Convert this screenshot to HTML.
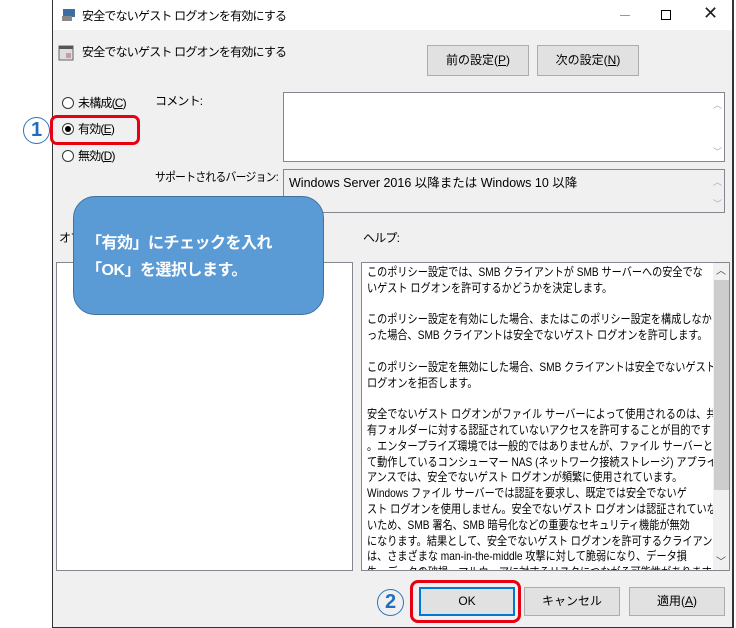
<!DOCTYPE html>
<html><head><meta charset="utf-8"><style>
*{margin:0;padding:0;box-sizing:border-box}
body{width:736px;height:628px;background:#fff;position:relative;overflow:hidden;font-family:"Liberation Sans","Noto Sans CJK JP",sans-serif;font-size:12px;color:#000}
.a{position:absolute}
.win{left:52px;top:0;width:682px;height:628px;background:#f0f0f0;border:1px solid #333;border-top:none;border-right:2px solid #333}
.title{left:53px;top:0;width:679px;height:30px;background:#fff}
.btn{position:absolute;background:#e1e1e1;border:1px solid #adadad;text-align:center;font-size:12px}
.box{position:absolute;background:#fff;border:1px solid #828790}
.nw{white-space:nowrap;letter-spacing:-0.8px}
.radio{position:absolute;width:12px;height:12px;border:1px solid #333;border-radius:50%;background:#fff}
.helpwrap{left:362px;top:263px;width:351px;height:307px;background:#fff;overflow:hidden}
.help{position:absolute;left:5px;top:2px;line-height:15.8px;font-size:12px;white-space:pre;transform:scaleX(0.845);transform-origin:0 0}
</style></head><body>
<div class="a win"></div>
<div class="a title"></div>
<svg class="a" style="left:61px;top:8px" width="16" height="14"><rect x="2" y="1" width="12" height="8" fill="#3b6ea5"/><rect x="1" y="8" width="10" height="5" fill="#888"/></svg>
<div class="a nw" style="left:82px;top:7px">安全でないゲスト ログオンを有効にする</div>
<div class="a" style="left:620px;top:15px;width:10px;height:1px;background:#999"></div>
<div class="a" style="left:661px;top:10px;width:10px;height:10px;border:1px solid #000"></div>
<div class="a" style="left:703px;top:3px;font-size:18px;color:#222">✕</div>
<svg class="a" style="left:58px;top:45px" width="16" height="16"><rect x="1" y="1" width="14" height="14" fill="#ddd" stroke="#666"/><rect x="1" y="1" width="14" height="3" fill="#555"/><rect x="8" y="8" width="5" height="5" fill="#c9a"/></svg>
<div class="a nw" style="left:82px;top:43px">安全でないゲスト ログオンを有効にする</div>
<div class="btn" style="left:427px;top:45px;width:102px;height:31px;line-height:29px">前の設定(<u>P</u>)</div>
<div class="btn" style="left:537px;top:45px;width:102px;height:31px;line-height:29px">次の設定(<u>N</u>)</div>
<div class="radio" style="left:62px;top:97px"></div><div class="a nw" style="left:78px;top:94px">未構成(<u>C</u>)</div>
<div class="radio" style="left:62px;top:123px"></div><div class="a" style="left:65px;top:126px;width:6px;height:6px;border-radius:50%;background:#000"></div><div class="a nw" style="left:78px;top:120px">有効(<u>E</u>)</div>
<div class="radio" style="left:62px;top:150px"></div><div class="a nw" style="left:78px;top:147px">無効(<u>D</u>)</div>
<div class="a" style="left:50px;top:115px;width:90px;height:30px;border:3px solid #e60012;border-radius:7px"></div>
<div class="a" style="left:23px;top:117px;width:27px;height:27px;border:1px solid #2e75b6;border-radius:50%;color:#1f6fbf;font-weight:bold;font-size:20px;text-align:center;line-height:25px">1</div>
<div class="a nw" style="left:155px;top:92px">コメント:</div>
<div class="box" style="left:283px;top:92px;width:442px;height:70px"></div>
<div class="a" style="left:713px;top:98px;color:#aaa;font-size:9px">︿</div><div class="a" style="left:713px;top:145px;color:#aaa;font-size:9px">﹀</div>
<div class="a nw" style="left:155px;top:168px;letter-spacing:-0.8px;transform:scaleX(0.9);transform-origin:0 0">サポートされるバージョン:</div>
<div class="box" style="left:283px;top:169px;width:442px;height:44px;background:#f0f0f0"></div>
<div class="a nw" style="left:289px;top:172px;font-size:12.5px;letter-spacing:0">Windows Server 2016 以降または Windows 10 以降</div>
<div class="a" style="left:713px;top:175px;color:#aaa;font-size:9px">︿</div><div class="a" style="left:713px;top:197px;color:#aaa;font-size:9px">﹀</div>
<div class="a nw" style="left:59px;top:229px">オプション:</div>
<div class="a nw" style="left:363px;top:229px">ヘルプ:</div>
<div class="box" style="left:56px;top:262px;width:297px;height:309px"></div>
<div class="box" style="left:361px;top:262px;width:369px;height:309px;background:#f0f0f0"></div>
<div class="a" style="left:714px;top:280px;width:15px;height:210px;background:#cdcdcd"></div>
<div class="a" style="left:716px;top:262px;color:#444;font-size:10px">︿</div>
<div class="a" style="left:716px;top:553px;color:#444;font-size:10px">﹀</div>
<div class="a helpwrap"><div class="help">このポリシー設定では、SMB クライアントが SMB サーバーへの安全でな
いゲスト ログオンを許可するかどうかを決定します。

このポリシー設定を有効にした場合、またはこのポリシー設定を構成しなか
った場合、SMB クライアントは安全でないゲスト ログオンを許可します。

このポリシー設定を無効にした場合、SMB クライアントは安全でないゲスト
ログオンを拒否します。

安全でないゲスト ログオンがファイル サーバーによって使用されるのは、共
有フォルダーに対する認証されていないアクセスを許可することが目的です
。エンタープライズ環境では一般的ではありませんが、ファイル サーバーとし
て動作しているコンシューマー NAS (ネットワーク接続ストレージ) アプライ
アンスでは、安全でないゲスト ログオンが頻繁に使用されています。
Windows ファイル サーバーでは認証を要求し、既定では安全でないゲ
スト ログオンを使用しません。安全でないゲスト ログオンは認証されていな
いため、SMB 署名、SMB 暗号化などの重要なセキュリティ機能が無効
になります。結果として、安全でないゲスト ログオンを許可するクライアント
は、さまざまな man-in-the-middle 攻撃に対して脆弱になり、データ損
失、データの破損、マルウェアに対するリスクにつながる可能性があります。
また、安全でないゲスト ログオンを使用してファイル サーバーに書き込まれ</div></div>
<div class="a" style="left:73px;top:196px;width:251px;height:119px;background:#5b9bd5;border:1px solid #41719c;border-radius:22px"></div>
<div class="a" style="left:86px;top:230px;white-space:nowrap;color:#fff;font-weight:bold;font-size:16px;line-height:27px;letter-spacing:-0.5px">「有効」にチェックを入れ<br>「OK」を選択します。</div>
<div class="btn" style="left:419px;top:587px;width:96px;height:29px;line-height:27px;border:1px solid #0078d7;box-shadow:inset 0 0 0 1px #0078d7">OK</div>
<div class="btn" style="left:524px;top:587px;width:96px;height:29px;line-height:27px">キャンセル</div>
<div class="btn" style="left:629px;top:587px;width:96px;height:29px;line-height:27px">適用(<u>A</u>)</div>
<div class="a" style="left:410px;top:580px;width:111px;height:43px;border:3px solid #e60012;border-radius:8px"></div>
<div class="a" style="left:377px;top:589px;width:27px;height:27px;border:1px solid #2e75b6;border-radius:50%;color:#1f6fbf;font-weight:bold;font-size:20px;text-align:center;line-height:25px">2</div>
</body></html>
